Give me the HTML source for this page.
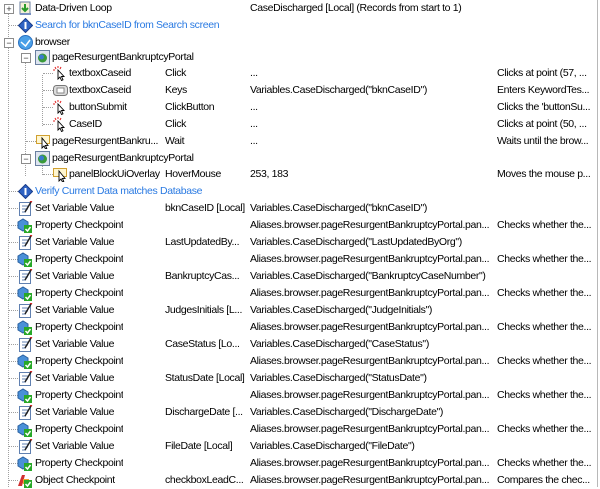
<!DOCTYPE html>
<html><head><meta charset="utf-8"><style>
body{margin:0;width:600px;height:487px;background:#fff;overflow:hidden;font-family:"Liberation Sans","DejaVu Sans",sans-serif;font-size:10.5px;letter-spacing:-0.35px;color:#000;position:relative}
.r{position:absolute;left:0;width:597px;height:17px;line-height:17px;white-space:nowrap}
.r span{position:absolute;top:0;overflow:hidden;white-space:nowrap}
.c2{left:165px;width:83px}.c3{left:250px;width:245px}.c4{left:497px;width:98px}
.b{color:#2a7ae2}
.ic{position:absolute;top:1px;width:15px;height:15px}
.vl{position:absolute;border-left:1px dotted #a0a0a0;width:0}
.hl{position:absolute;border-top:1px dotted #a0a0a0;height:0;top:8px}
.bx{position:absolute;top:4px;width:8px;height:8px;border:1px solid #8c8c8c;background:#fff;font-size:9px;line-height:8px;text-align:center;color:#333;letter-spacing:0}
#rb{position:absolute;left:597px;top:0;width:1px;height:487px;background:#b8b8b8}
</style></head><body>
<div id="rb"></div>
<svg width="0" height="0" style="position:absolute"><defs>
<symbol id="sv" viewBox="0 0 15 15"><rect x="1.5" y="1.5" width="11" height="13" fill="#fff" stroke="#6080b0"/><path d="M4 5h6M4 8h6M4 11h4" stroke="#6080b0"/><path d="M7 11L13 1" stroke="#202020" stroke-width="1.5"/><path d="M12 0l2 1" stroke="#d02020" stroke-width="1.5"/></symbol>
<symbol id="pc" viewBox="0 0 15 15"><path d="M1 4l5-3 5 3v6l-5 3-5-3z" fill="#4a90d8" stroke="#2a60a0"/><rect x="7" y="7" width="8" height="8" fill="#28a828"/><path d="M8.5 11l2 2 3-4" stroke="#fff" stroke-width="1.5" fill="none"/></symbol>
<symbol id="oc" viewBox="0 0 15 15"><path d="M1 13L5 2h3l-3 11z" fill="#d03030"/><path d="M6 6h6v5H6z" fill="#f0a030"/><rect x="7" y="7" width="8" height="8" fill="#28a828"/><path d="M8.5 11l2 2 3-4" stroke="#fff" stroke-width="1.5" fill="none"/></symbol>
<symbol id="ck" viewBox="0 0 15 15"><path d="M2 1l1 2M5 0v2M0 4h2M8 1l-1 2" stroke="#e02020" stroke-width="1"/><path d="M5 4v9l2-2 1.5 3.5 1.5-.7L8.5 10.5H11L5 4z" fill="#fff" stroke="#000" stroke-width="0.9"/></symbol>
<symbol id="wt" viewBox="0 0 15 15"><rect x="0.5" y="1.5" width="13" height="8" fill="#fff6d0" stroke="#d0a030"/><path d="M6 4v10l2-2 1.5 3 1.3-.6-1.4-3H12z" fill="#fff" stroke="#000" stroke-width="0.9"/></symbol>
<symbol id="pg" viewBox="0 0 15 15"><rect x="0.5" y="0.5" width="14" height="14" fill="#dde4f0" stroke="#6a7fa0"/><circle cx="7.5" cy="8" r="4.5" fill="#3a9a3a"/><circle cx="6.5" cy="7" r="2.5" fill="#3a7ad0"/></symbol>
<symbol id="dm" viewBox="0 0 15 15"><path d="M7.5 0.5L14.5 7.5 7.5 14.5 0.5 7.5Z" fill="#2f63c4" stroke="#1a3d8a"/><rect x="6.5" y="4" width="2" height="7" fill="#fff"/></symbol>
</defs></svg>
<div class="vl" style="left:8px;top:8px;height:479px"></div>
<div class="vl" style="left:25px;top:60px;height:116px"></div>
<div class="vl" style="left:42px;top:75px;height:51px"></div>
<div class="vl" style="left:42px;top:165px;height:10px"></div>

<div class="r" style="top:0"><div class="bx" style="left:4px">+</div><svg class="ic" style="left:18px" viewBox="0 0 15 15"><rect x="2" y="1" width="10" height="12" fill="#f4f0d8" stroke="#6a7fa0"/><path d="M7 3v6M4 7l3 3 3-3" stroke="#2a9a2a" stroke-width="2" fill="none"/><rect x="2" y="12" width="11" height="2" fill="#7890c0"/></svg><span style="left:35px">Data-Driven Loop</span><span class="c3" style="width:300px">CaseDischarged [Local] (Records from start to 1)</span></div>
<div class="r" style="top:17px"><div class="hl" style="left:9px;width:9px"></div><svg class="ic" style="left:18px"><use href="#dm"/></svg><span class="b" style="left:35px">Search for bknCaseID from Search screen</span></div>
<div class="r" style="top:34px"><div class="bx" style="left:4px">−</div><svg class="ic" style="left:18px" viewBox="0 0 15 15"><circle cx="7.5" cy="7.5" r="7" fill="#4aa0e8" stroke="#2a70c0"/><path d="M3 7l4.5 4 4.5-6" stroke="#fff" stroke-width="1.5" fill="none"/></svg><span style="left:35px">browser</span></div>
<div class="r" style="top:49px"><div class="bx" style="left:21px">−</div><svg class="ic" style="left:35px"><use href="#pg"/></svg><span style="left:52px">pageResurgentBankruptcyPortal</span></div>

<div class="r" style="top:65px"><div class="hl" style="left:43px;width:10px"></div><svg class="ic" style="left:53px"><use href="#ck"/></svg><span style="left:69px">textboxCaseid</span><span class="c2">Click</span><span class="c3">...</span><span class="c4">Clicks at point (57, ...</span></div>
<div class="r" style="top:82px"><div class="hl" style="left:43px;width:10px"></div><svg class="ic" style="left:53px" viewBox="0 0 15 15"><rect x="0.5" y="2.5" width="14" height="10" rx="3" fill="#ddd" stroke="#777"/><rect x="4" y="5" width="7" height="5" fill="#fff" stroke="#888"/></svg><span style="left:69px">textboxCaseid</span><span class="c2">Keys</span><span class="c3">Variables.CaseDischarged("bknCaseID")</span><span class="c4">Enters KeywordTes...</span></div>
<div class="r" style="top:99px"><div class="hl" style="left:43px;width:10px"></div><svg class="ic" style="left:53px"><use href="#ck"/></svg><span style="left:69px">buttonSubmit</span><span class="c2">ClickButton</span><span class="c3">...</span><span class="c4">Clicks the 'buttonSu...</span></div>
<div class="r" style="top:116px"><div class="hl" style="left:43px;width:10px"></div><svg class="ic" style="left:53px"><use href="#ck"/></svg><span style="left:69px">CaseID</span><span class="c2">Click</span><span class="c3">...</span><span class="c4">Clicks at point (50, ...</span></div>
<div class="r" style="top:133px"><div class="hl" style="left:26px;width:10px"></div><svg class="ic" style="left:36px"><use href="#wt"/></svg><span style="left:52px">pageResurgentBankru...</span><span class="c2">Wait</span><span class="c3">...</span><span class="c4">Waits until the brow...</span></div>
<div class="r" style="top:150px"><div class="bx" style="left:21px">−</div><svg class="ic" style="left:35px"><use href="#pg"/></svg><span style="left:52px">pageResurgentBankruptcyPortal</span></div>
<div class="r" style="top:166px"><div class="hl" style="left:43px;width:10px"></div><svg class="ic" style="left:53px"><use href="#wt"/></svg><span style="left:69px">panelBlockUiOverlay</span><span class="c2">HoverMouse</span><span class="c3">253, 183</span><span class="c4">Moves the mouse p...</span></div>
<div class="r" style="top:183px"><div class="hl" style="left:9px;width:9px"></div><svg class="ic" style="left:18px"><use href="#dm"/></svg><span class="b" style="left:35px">Verify Current Data matches Database</span></div>

<div class="r" style="top:200px"><div class="hl" style="left:9px;width:9px"></div><svg class="ic" style="left:18px"><use href="#sv"/></svg><span style="left:35px">Set Variable Value</span><span class="c2">bknCaseID [Local]</span><span class="c3">Variables.CaseDischarged("bknCaseID")</span></div>
<div class="r" style="top:217px"><div class="hl" style="left:9px;width:9px"></div><svg class="ic" style="left:17px"><use href="#pc"/></svg><span style="left:35px">Property Checkpoint</span><span class="c3">Aliases.browser.pageResurgentBankruptcyPortal.pan...</span><span class="c4">Checks whether the...</span></div>
<div class="r" style="top:234px"><div class="hl" style="left:9px;width:9px"></div><svg class="ic" style="left:18px"><use href="#sv"/></svg><span style="left:35px">Set Variable Value</span><span class="c2">LastUpdatedBy...</span><span class="c3">Variables.CaseDischarged("LastUpdatedByOrg")</span></div>
<div class="r" style="top:251px"><div class="hl" style="left:9px;width:9px"></div><svg class="ic" style="left:17px"><use href="#pc"/></svg><span style="left:35px">Property Checkpoint</span><span class="c3">Aliases.browser.pageResurgentBankruptcyPortal.pan...</span><span class="c4">Checks whether the...</span></div>
<div class="r" style="top:268px"><div class="hl" style="left:9px;width:9px"></div><svg class="ic" style="left:18px"><use href="#sv"/></svg><span style="left:35px">Set Variable Value</span><span class="c2">BankruptcyCas...</span><span class="c3">Variables.CaseDischarged("BankruptcyCaseNumber")</span></div>
<div class="r" style="top:285px"><div class="hl" style="left:9px;width:9px"></div><svg class="ic" style="left:17px"><use href="#pc"/></svg><span style="left:35px">Property Checkpoint</span><span class="c3">Aliases.browser.pageResurgentBankruptcyPortal.pan...</span><span class="c4">Checks whether the...</span></div>
<div class="r" style="top:302px"><div class="hl" style="left:9px;width:9px"></div><svg class="ic" style="left:18px"><use href="#sv"/></svg><span style="left:35px">Set Variable Value</span><span class="c2">JudgesInitials [L...</span><span class="c3">Variables.CaseDischarged("JudgeInitials")</span></div>
<div class="r" style="top:319px"><div class="hl" style="left:9px;width:9px"></div><svg class="ic" style="left:17px"><use href="#pc"/></svg><span style="left:35px">Property Checkpoint</span><span class="c3">Aliases.browser.pageResurgentBankruptcyPortal.pan...</span><span class="c4">Checks whether the...</span></div>
<div class="r" style="top:336px"><div class="hl" style="left:9px;width:9px"></div><svg class="ic" style="left:18px"><use href="#sv"/></svg><span style="left:35px">Set Variable Value</span><span class="c2">CaseStatus [Lo...</span><span class="c3">Variables.CaseDischarged("CaseStatus")</span></div>
<div class="r" style="top:353px"><div class="hl" style="left:9px;width:9px"></div><svg class="ic" style="left:17px"><use href="#pc"/></svg><span style="left:35px">Property Checkpoint</span><span class="c3">Aliases.browser.pageResurgentBankruptcyPortal.pan...</span><span class="c4">Checks whether the...</span></div>
<div class="r" style="top:370px"><div class="hl" style="left:9px;width:9px"></div><svg class="ic" style="left:18px"><use href="#sv"/></svg><span style="left:35px">Set Variable Value</span><span class="c2">StatusDate [Local]</span><span class="c3">Variables.CaseDischarged("StatusDate")</span></div>
<div class="r" style="top:387px"><div class="hl" style="left:9px;width:9px"></div><svg class="ic" style="left:17px"><use href="#pc"/></svg><span style="left:35px">Property Checkpoint</span><span class="c3">Aliases.browser.pageResurgentBankruptcyPortal.pan...</span><span class="c4">Checks whether the...</span></div>
<div class="r" style="top:404px"><div class="hl" style="left:9px;width:9px"></div><svg class="ic" style="left:18px"><use href="#sv"/></svg><span style="left:35px">Set Variable Value</span><span class="c2">DischargeDate [...</span><span class="c3">Variables.CaseDischarged("DischargeDate")</span></div>
<div class="r" style="top:421px"><div class="hl" style="left:9px;width:9px"></div><svg class="ic" style="left:17px"><use href="#pc"/></svg><span style="left:35px">Property Checkpoint</span><span class="c3">Aliases.browser.pageResurgentBankruptcyPortal.pan...</span><span class="c4">Checks whether the...</span></div>
<div class="r" style="top:438px"><div class="hl" style="left:9px;width:9px"></div><svg class="ic" style="left:18px"><use href="#sv"/></svg><span style="left:35px">Set Variable Value</span><span class="c2">FileDate [Local]</span><span class="c3">Variables.CaseDischarged("FileDate")</span></div>
<div class="r" style="top:455px"><div class="hl" style="left:9px;width:9px"></div><svg class="ic" style="left:17px"><use href="#pc"/></svg><span style="left:35px">Property Checkpoint</span><span class="c3">Aliases.browser.pageResurgentBankruptcyPortal.pan...</span><span class="c4">Checks whether the...</span></div>
<div class="r" style="top:472px"><div class="hl" style="left:9px;width:9px"></div><svg class="ic" style="left:17px"><use href="#oc"/></svg><span style="left:35px">Object Checkpoint</span><span class="c2">checkboxLeadC...</span><span class="c3">Aliases.browser.pageResurgentBankruptcyPortal.pan...</span><span class="c4">Compares the chec...</span></div>
</body></html>
